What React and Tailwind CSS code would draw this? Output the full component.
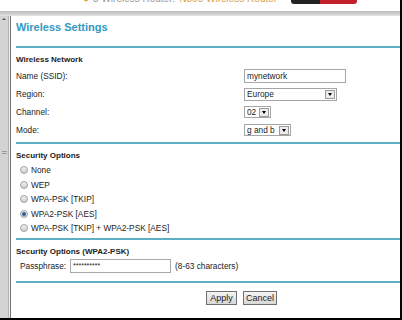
// Wireless Settings page of a router admin, seen inside a browser frame

function Select({ value, box }) {
  return (
    <div className={`flex items-center justify-between border border-[#a5a5a5] bg-white pl-[2px] pr-[1px] ${box}`}>
      <span className="leading-none">{value}</span>
      <span className="w-[10px] h-[9px] border border-[#9a9a9a] bg-[#ececec] flex items-center justify-center">
        <span className="w-0 h-0 border-l-[2.5px] border-r-[2.5px] border-t-[3px] border-l-transparent border-r-transparent border-t-black" />
      </span>
    </div>
  )
}

function Row({ label, children }) {
  return (
    <div className="h-[18px] grid grid-cols-[228px_1fr] items-center">
      <span>{label}</span>
      <div className="flex">{children}</div>
    </div>
  )
}

function Radio({ label, checked }) {
  return (
    <div className="h-[14.5px] flex items-center pl-[4px]">
      <span className="w-[8px] h-[8px] rounded-full border border-[#a0a0a0] bg-linear-to-b from-[#f2f2f2] to-[#cdcdcd] flex items-center justify-center">
        {checked && <span className="w-[4px] h-[4px] rounded-full bg-[#2f5f9f]" />}
      </span>
      <span className="ml-[3px]">{label}</span>
    </div>
  )
}

function Line() {
  return <div className="h-[2px] bg-[#5eaec4]" />
}

export default function App() {
  return (
    <div className="w-[402px] h-[320px] overflow-hidden bg-white flex flex-col font-['Liberation_Sans',Arial,sans-serif] text-[#222] text-[8.3px]">

      {/* Bande coupée du haut (barre de favoris) */}
      <div className="h-[11px] flex border-r-2 border-black overflow-hidden">
        <div className="w-[83px]" />
        <div className="w-[208px] -mt-[7px] flex items-center gap-[4px] text-[10px] leading-[12px] h-[12px] whitespace-nowrap">
          <span className="text-[#e0a030]">●</span>
          <span className="text-[#9a9a9a]">3 Wireless Router:</span>
          <span className="text-[#d9a050]">N300 Wireless Router</span>
        </div>
        <div className="w-[29px] h-[4px] bg-[#222] rounded-bl-[3px]" />
        <div className="w-[37px] h-[4px] bg-[#c3202c] rounded-br-[3px]" />
      </div>

      {/* Barre grise du navigateur */}
      <div className="h-[5px] bg-linear-to-b from-[#b9b9b9] to-[#e2e2e2] border-r-2 border-black" />

      <div className="flex-1 flex border-r-2 border-b-2 border-black">

        {/* Barre de défilement à gauche */}
        <div className="w-[9px] bg-[#d3d3d3] border-r border-[#b4b4b4] flex flex-col items-center">
          <span className="mt-[2px] w-0 h-0 border-l-[2px] border-r-[2px] border-b-[2px] border-l-transparent border-r-transparent border-b-[#555]" />
          <div className="mt-[131px] w-[5px] h-[3px] border-y border-[#999]" />
        </div>
        <div className="w-[2px] bg-[#ececec] border-r border-[#777]" />

        {/* Contenu */}
        <div className="flex-1 pl-[5px] flex flex-col">
          <div className="h-[30px] pt-[5px]">
            <h1 className="text-[11px] leading-[12px] font-bold text-[#3399c2]">Wireless Settings</h1>
          </div>
          <Line />

          {/* Réseau sans fil */}
          <div className="mt-[5px] h-[14px] leading-[14px] font-bold text-[8px]">Wireless Network</div>
          <Row label="Name (SSID):">
            <div className="w-[102px] h-[14px] border border-[#a8a8a8] pl-[2px] flex items-center">mynetwork</div>
          </Row>
          <Row label="Region:">
            <Select value="Europe" box="w-[93px] h-[13px]" />
          </Row>
          <Row label="Channel:">
            <Select value="02" box="w-[27px] h-[12px]" />
          </Row>
          <Row label="Mode:">
            <Select value="g and b" box="w-[47px] h-[12px]" />
          </Row>
          <div className="mt-[3px]"><Line /></div>

          {/* Options de sécurité */}
          <div className="mt-[5px] h-[14px] leading-[14px] font-bold text-[8px]">Security Options</div>
          <Radio label="None" />
          <Radio label="WEP" />
          <Radio label="WPA-PSK [TKIP]" />
          <Radio label="WPA2-PSK [AES]" checked />
          <Radio label="WPA-PSK [TKIP] + WPA2-PSK [AES]" />
          <div className="mt-[2.5px]"><Line /></div>

          {/* Phrase secrète */}
          <div className="mt-[5px] h-[14px] leading-[14px] font-bold text-[8px]">Security Options (WPA2-PSK)</div>
          <div className="h-[14px] flex items-center pl-[4px]">
            <span className="w-[50px]">Passphrase:</span>
            <div className="w-[101px] h-[14px] border border-[#a8a8a8] pl-[2px] flex items-center text-[7px]">**********</div>
            <span className="ml-[4px]">(8-63 characters)</span>
          </div>
          <div className="mt-[8px]"><Line /></div>

          {/* Boutons */}
          <div className="mt-[8px] flex gap-[6px] pl-[190px]">
            <button className="w-[31px] h-[14px] border border-[#707070] bg-linear-to-b from-[#f4f4f4] to-[#d8d8d8] text-[9px] leading-none">Apply</button>
            <button className="w-[34px] h-[14px] border border-[#707070] bg-linear-to-b from-[#f4f4f4] to-[#d8d8d8] text-[9px] leading-none">Cancel</button>
          </div>
        </div>
      </div>
    </div>
  )
}
